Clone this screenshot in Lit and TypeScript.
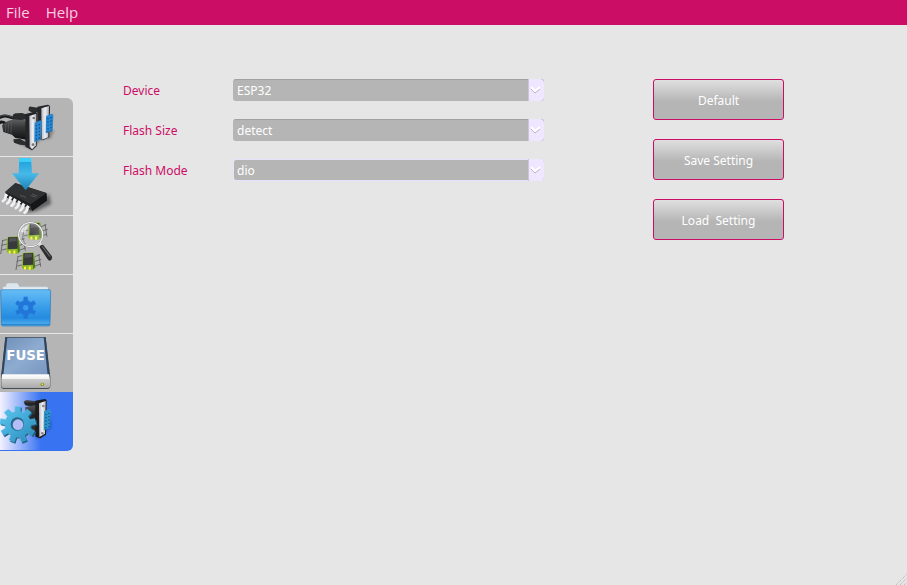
import { LitElement, html, svg, css } from "lit";
import { customElement, state } from "lit/decorators.js";
import { classMap } from "lit/directives/class-map.js";

const gearPath = (cx: number, cy: number, teeth: number, outer: number, inner: number, width = 0.2) => {
  const step = (Math.PI * 2) / teeth;
  const points: string[] = [];
  for (let i = 0; i < teeth; i++) {
    const a = i * step - Math.PI / 2;
    for (const [offset, r] of [[-width - 0.08, inner], [-width, outer], [width, outer], [width + 0.08, inner]]) {
      const t = a + offset * step;
      points.push(`${(cx + Math.cos(t) * r).toFixed(1)} ${(cy + Math.sin(t) * r).toFixed(1)}`);
    }
  }
  return `M${points.join("L")}Z`;
};

const pins = (x: number, y: number) =>
  [0, 1, 2, 3, 4].map(
    (i) => svg`<circle cx=${x} cy=${y + i * 10} r="2" fill="#123f6b"/><circle cx=${x + 9} cy=${y - 3 + i * 10} r="2" fill="#123f6b"/>`
  );

const serialIcon = svg`
  <defs>
    <linearGradient id="cable" x1="0" y1="0" x2="0" y2="1"><stop offset="0" stop-color="#666"/><stop offset=".4" stop-color="#38393b"/><stop offset="1" stop-color="#101112"/></linearGradient>
    <linearGradient id="plate" x1="0" y1="0" x2="1" y2="0"><stop offset="0" stop-color="#b9bcc4"/><stop offset=".5" stop-color="#eef0f5"/><stop offset="1" stop-color="#a9acb5"/></linearGradient>
    <filter id="soft"><feGaussianBlur stdDeviation="3"/></filter>
  </defs>
  <path d="M50 160L98 180L122 150L152 146L164 120L120 130Z" fill="#555" opacity=".45" filter="url(#soft)"/>
  <path d="M86 53Q88 49 94 50L118 54L120 66L98 68L86 62Z" fill="#2c2d2f"/>
  <path d="M112 50L143 44Q150 44 150 52L148 142L128 151L112 145Z" fill="#26272a"/>
  <path d="M124 55L147 48L145 142L125 149Z" fill="url(#plate)"/>
  <path d="M138 78L156 71Q161 72 160 78L158 122L137 130Z" fill="#2787d3"/>
  ${pins(144, 86)}
  <path d="M-4 84C14 72 26 80 44 86M-4 100C6 92 12 96 20 104" fill="none" stroke="#181a1c" stroke-width="9"/>
  <path d="M-4 82C14 70 26 78 44 84" fill="none" stroke="#66696b" stroke-width="2"/>
  <path d="M6 106Q16 94 34 90L60 84L84 95L84 150L62 146L46 144L36 134L10 126Z" fill="url(#cable)"/>
  <path d="M18 102L16 126M26 96L24 129M34 94L33 131" stroke="#5b5d60" stroke-width="2"/>
  <path d="M38 76Q42 69 50 70L66 69L86 76L84 88L62 90L40 88ZM40 148L60 146L80 158L78 166L60 164L42 158Z" fill="#2b2c2e"/>
  <path d="M76 72L104 65Q112 66 112 74L110 168L96 181L76 170Z" fill="#242527"/>
  <path d="M88 78L109 71L108 166L96 178L89 170Z" fill="url(#plate)"/>
  <path d="M104 98L121 91Q126 93 125 99L122 149L103 156Z" fill="#2787d3"/>
  ${pins(109, 107)}
  <circle cx="101" cy="84" r="4" fill="#777"/><circle cx="99" cy="164" r="4" fill="#777"/>`;

const downloadIcon = svg`
  <defs>
    <linearGradient id="arrow" x1="0" y1="0" x2="0" y2="1"><stop offset="0" stop-color="#3ccaf4"/><stop offset=".1" stop-color="#37c0ee"/><stop offset=".14" stop-color="#25a6df"/><stop offset=".5" stop-color="#47b9e7"/><stop offset="1" stop-color="#1782b6"/></linearGradient>
    <filter id="chipShade"><feGaussianBlur stdDeviation="4"/></filter>
  </defs>
  <path d="M70 184L110 178L154 156L148 126L100 160Z" fill="#333" opacity=".6" filter="url(#chipShade)"/>
  <path d="M16 120L46 94L140 124L141 146L96 178L90 160Z" fill="#151617"/>
  <path d="M16 119L46 93L140 123L92 157Z" fill="#303133"/>
  <path d="M16 119L92 157L92 176L84 168L18 136Z" fill="#202122"/>
  <path d="M60 130L78 136M96 126L112 132M92 130L108 136" stroke="#666" stroke-width="2"/>
  ${[0, 1, 2, 3, 4, 5].map((i) => svg`<path d="M${17 + i * 13} ${124 + i * 7}q-5 2 -4 10q0 6 -9 12l3 6q12 -4 13 -14q1 -6 5 -8z" fill="#f0f1f3"/>`)}
  <path d="M58 18H93L96 64H117L77 115L36 64H56Z" fill="url(#arrow)"/>
  <path d="M58 18H93L94 29H57Z" fill="#3bd0f9"/>`;

const miniChip = (x: number, y: number) => svg`
  <g transform="translate(${x} ${y})">
    <path d="M-16 10L3 6M-18 24L0 20M-16 38L0 34M36 10L52 4M36 24L56 18M38 38L54 32M-14 10L-20 50M48 2L54 40" stroke="#5c5c5c" stroke-width="2.5" fill="none"/>
    <path d="M-1 3L4 -2L34 -3L38 42L30 50L2 48L-3 40Z" fill="#8db92c"/>
    <path d="M33 -2L38 42L32 48L30 30Z" fill="#4e7c16"/>
    <path d="M2 0L31 -1L31 34L1 36Z" fill="#37393a"/>
    <path d="M6 2L28 1L28 11L5 14Z" fill="#505254"/>
    <path d="M4 40L10 40L10 49L4 48ZM18 40L24 39L24 49L18 49Z" fill="#fff04a"/>
  </g>`;

const searchIcon = svg`
  <defs>
    <radialGradient id="lens"><stop offset="0" stop-color="#fff" stop-opacity=".05"/><stop offset=".8" stop-color="#eee" stop-opacity=".2"/><stop offset="1" stop-color="#fff" stop-opacity=".5"/></radialGradient>
    <linearGradient id="grip" x1="0" y1="1" x2="1" y2="0"><stop offset="0" stop-color="#111"/><stop offset=".6" stop-color="#333"/><stop offset="1" stop-color="#999"/></linearGradient>
  </defs>
  ${miniChip(22, 76)}${miniChip(87, 34)}${miniChip(68, 124)}
  <circle cx="92" cy="68" r="36" fill="url(#lens)" stroke="#777" stroke-width="6"/>
  <circle cx="92" cy="68" r="36" fill="none" stroke="#f2f2f2" stroke-width="4"/>
  <path d="M62 60Q70 38 88 38Q78 48 76 62Z" fill="#fff" opacity=".6"/>
  <path d="M114 96L121 90L127 98L120 105Z" fill="#ddd"/>
  <path d="M118 104Q123 96 130 99L156 133Q158 144 149 146Q146 146 143 142Z" fill="url(#grip)"/>
  <path d="M126 103L150 134" stroke="#777" stroke-width="3"/>`;

const folderIcon = svg`
  <defs><linearGradient id="folder" x1="0" y1="0" x2="0" y2="1"><stop offset="0" stop-color="#66bdf5"/><stop offset=".5" stop-color="#379ce9"/><stop offset=".78" stop-color="#258be0"/><stop offset="1" stop-color="#55b4f3"/></linearGradient></defs>
  <path d="M8 60V48Q8 44 13 44H17L20 36Q21 34 25 34H50Q54 34 55 38L58 44H139Q144 44 144 49V60Z" fill="#dce7ed"/>
  <path d="M10 54V50H142V54" fill="#f6fafc"/>
  <path d="M2 57Q2 53 7 53H147Q152 53 152 58L150 157Q150 162 144 162H9Q4 162 4 157Z" fill="url(#folder)" stroke="#2778b8" stroke-width="2"/>
  <path d="M5 158H149" stroke="#1767a8" stroke-width="2"/>
  <path d="${gearPath(77, 107, 6, 32, 22, 0.16)}" fill="#2176d8" stroke="#2176d8" stroke-width="2"/>
  <circle cx="77" cy="107" r="8" fill="#3a9cec"/>`;

const fuseIcon = svg`
  <defs>
    <linearGradient id="drive" x1="0" y1="0" x2="1" y2="1"><stop offset="0" stop-color="#6f8fb8"/><stop offset=".5" stop-color="#8eabd0"/><stop offset="1" stop-color="#7896bf"/></linearGradient>
    <linearGradient id="base" x1="0" y1="0" x2="0" y2="1"><stop offset="0" stop-color="#fff"/><stop offset=".32" stop-color="#f0f0f0"/><stop offset=".36" stop-color="#ccc"/><stop offset="1" stop-color="#aaa"/></linearGradient>
  </defs>
  <path d="M16 21H137L151 142V168Q151 176 143 177H10Q3 176 3 168V142Z" fill="#454c55"/>
  <path d="M20 23H134L147 134H6Z" fill="url(#drive)"/>
  <path d="M16 22L4 136H10L22 22ZM131 22L143 136H149L137 22Z" fill="#2e4561"/>
  <path d="M6 133H147L150 149V168Q150 174 143 174H11Q4 174 4 168V149Z" fill="url(#base)"/>
  <circle cx="127" cy="163" r="5" fill="#6f7620"/><circle cx="127" cy="163" r="3" fill="#e8ef22"/>
  <text class="fuse" x="77" y="91" text-anchor="middle">FUSE</text>`;

const configIcon = svg`
  <defs>
    <linearGradient id="cog" x1="0" y1="0" x2="1" y2="1"><stop offset="0" stop-color="#5cc6ee"/><stop offset=".5" stop-color="#43abd8"/><stop offset="1" stop-color="#2a86b6"/></linearGradient>
    <linearGradient id="plug" x1="0" y1="0" x2="0" y2="1"><stop offset="0" stop-color="#55575b"/><stop offset=".4" stop-color="#222427"/><stop offset="1" stop-color="#303236"/></linearGradient>
    <linearGradient id="shell" x1="0" y1="0" x2="1" y2="0"><stop offset="0" stop-color="#b9bcc4"/><stop offset=".5" stop-color="#eef0f5"/><stop offset="1" stop-color="#b9bcc4"/></linearGradient>
    <filter id="glow"><feGaussianBlur stdDeviation="4"/></filter>
  </defs>
  <path d="M112 154L154 118L150 86L100 120Z" fill="#123a94" opacity=".55" filter="url(#glow)"/>
  <path d="M71 42Q74 36 82 36L118 41L116 62L76 52Z" fill="url(#plug)"/>
  <path d="M76 58L112 50L118 130L80 126Z" fill="url(#plug)"/>
  <path d="M106 38L134 33Q141 34 140 42L138 140L121 151L106 146Z" fill="#1b1c1f"/>
  <path d="M117 46L137 39L135 137L118 147Z" fill="url(#shell)"/>
  <path d="M132 70L149 64Q154 65 153 71L149 120L131 127Z" fill="#2d93c9"/>
  ${pins(138, 79)}
  <circle cx="130" cy="54" r="4" fill="#888"/><circle cx="127" cy="136" r="4" fill="#888"/>
  <path d="${gearPath(57, 113, 9, 55, 39, 0.22)}" fill="#1c6488"/>
  <path d="${gearPath(53, 109, 9, 54, 39, 0.22)}" fill="url(#cog)" stroke="#67c8eb" stroke-width="1"/>
  <circle cx="52" cy="108" r="20" fill="#27698c"/>
  <circle cx="54" cy="110" r="16" fill="#b4bdf5"/>`;

const pages = [
  { name: "Serial", top: 24, icon: serialIcon },
  { name: "Download", top: 15, icon: downloadIcon },
  { name: "Detect", top: 12, icon: searchIcon },
  { name: "Project", top: 9, icon: folderIcon },
  { name: "Fuse", top: 12, icon: fuseIcon },
  { name: "Configuration", top: 12, icon: configIcon },
];

const fields = [
  { id: "device", label: "Device", options: ["ESP32", "ESP8266"], active: false },
  { id: "size", label: "Flash Size", options: ["detect", "1MB", "2MB", "4MB"], active: false },
  { id: "mode", label: "Flash Mode", options: ["dio", "qio", "dout"], active: true },
];

@customElement("app-root")
export class AppRoot extends LitElement {
  @state() private page = 5;

  static styles = css`
    :host {
      display: flex;
      flex-direction: column;
      position: relative;
      min-height: 100vh;
      background: #e6e6e6;
      font: 12px/16px "Noto Sans", "Open Sans", sans-serif;
    }
    * { box-sizing: border-box; }
    button, select { font: inherit; margin: 0; }
    .menu {
      display: flex;
      gap: 16px;
      height: 25px;
      padding: 0 6px;
      background: #cc0d66;
    }
    .menu button {
      padding: 0;
      border: 0;
      background: none;
      color: #f4cfe0;
      font: 15px/25px "Open Sans", sans-serif;
    }
    .body { display: flex; align-items: flex-start; }
    .tabs {
      display: flex;
      flex-direction: column;
      flex: none;
      width: 73px;
      margin-top: 73px;
    }
    .tab {
      display: block;
      height: 59px;
      padding: 0;
      border: 0;
      border-bottom: 1px solid #e6e6e6;
      background: #b5b5b5;
    }
    .tab:first-child { border-top-right-radius: 6px; }
    .tab:nth-child(5) { height: 58px; border-bottom: 0; }
    .tab:last-child { border-bottom-right-radius: 6px; }
    .tab.current {
      border-bottom: 1px solid #3874f2;
      background: linear-gradient(90deg, #f4f1ff, #3874f2 56%);
    }
    .tab svg { display: block; width: 100%; height: 58px; }
    .fuse { font: bold 40px "DejaVu Sans", sans-serif; fill: #fff; }
    .form {
      display: grid;
      gap: 18px;
      flex: 0 1 421px;
      margin: 54px 0 0 50px;
    }
    .field { display: grid; grid-template-columns: 110px 1fr; align-items: center; }
    .field label { padding-top: 2px; color: #cc0d66; }
    .combo { display: grid; position: relative; }
    .combo select {
      appearance: none;
      width: 100%;
      height: 22px;
      padding: 2px 20px 0 3px;
      border: 1px solid #b5b5b5;
      border-top-color: #a0a0a0;
      border-right: 0;
      border-radius: 3px;
      background: #b5b5b5;
      color: #fff;
      outline: none;
    }
    .combo.active select { border-color: #e8e0fc; }
    .drop {
      position: absolute;
      top: 0;
      right: 0;
      width: 16px;
      height: 22px;
      border-left: 1px solid #cdc4dc;
      border-radius: 0 4px 4px 0;
      background: #efe6ff;
      pointer-events: none;
    }
    .actions {
      display: grid;
      gap: 19px;
      width: 131px;
      margin: 54px 0 0 109px;
    }
    .actions button {
      height: 41px;
      padding: 2px 0 0;
      border: 1px solid #cc0d66;
      border-radius: 3px;
      background: linear-gradient(#e0e0e0, #b5b5b5 55%);
      color: #fff;
      white-space: pre;
    }
    .grip { position: absolute; right: 0; bottom: 0; width: 12px; height: 12px; }
  `;

  render() {
    return html`
      <nav class="menu"><button>File</button><button>Help</button></nav>
      <main class="body">
        <div class="tabs" role="tablist">
          ${pages.map(
            (p, i) => html`<button
              class=${classMap({ tab: true, current: i === this.page })}
              role="tab"
              aria-label=${p.name}
              aria-selected=${i === this.page}
              @click=${() => (this.page = i)}
            ><svg viewBox="0 ${p.top} 219 174" preserveAspectRatio="xMinYMin">${p.icon}</svg></button>`
          )}
        </div>
        <form class="form">
          ${fields.map(
            (f) => html`<div class="field">
              <label for=${f.id}>${f.label}</label>
              <div class=${classMap({ combo: true, active: f.active })}>
                <select id=${f.id}>${f.options.map((o) => html`<option>${o}</option>`)}</select>
                <svg class="drop" viewBox="0 0 15 22">
                  <path d="M2 10L6 14L11 10" fill="none" stroke="#b9b2c4"/>
                  <path d="M2 8L6 12L11 8" fill="none" stroke="#fff" stroke-width="2"/>
                </svg>
              </div>
            </div>`
          )}
        </form>
        <div class="actions">
          <button>Default</button>
          <button>Save Setting</button>
          <button>${"Load  Setting"}</button>
        </div>
      </main>
      <svg class="grip" viewBox="0 0 12 12">
        <path d="M1 12L12 1M5 12L12 5M9 12L12 9" stroke="#b0b0b0" stroke-dasharray="1 1"/>
      </svg>
    `;
  }
}
